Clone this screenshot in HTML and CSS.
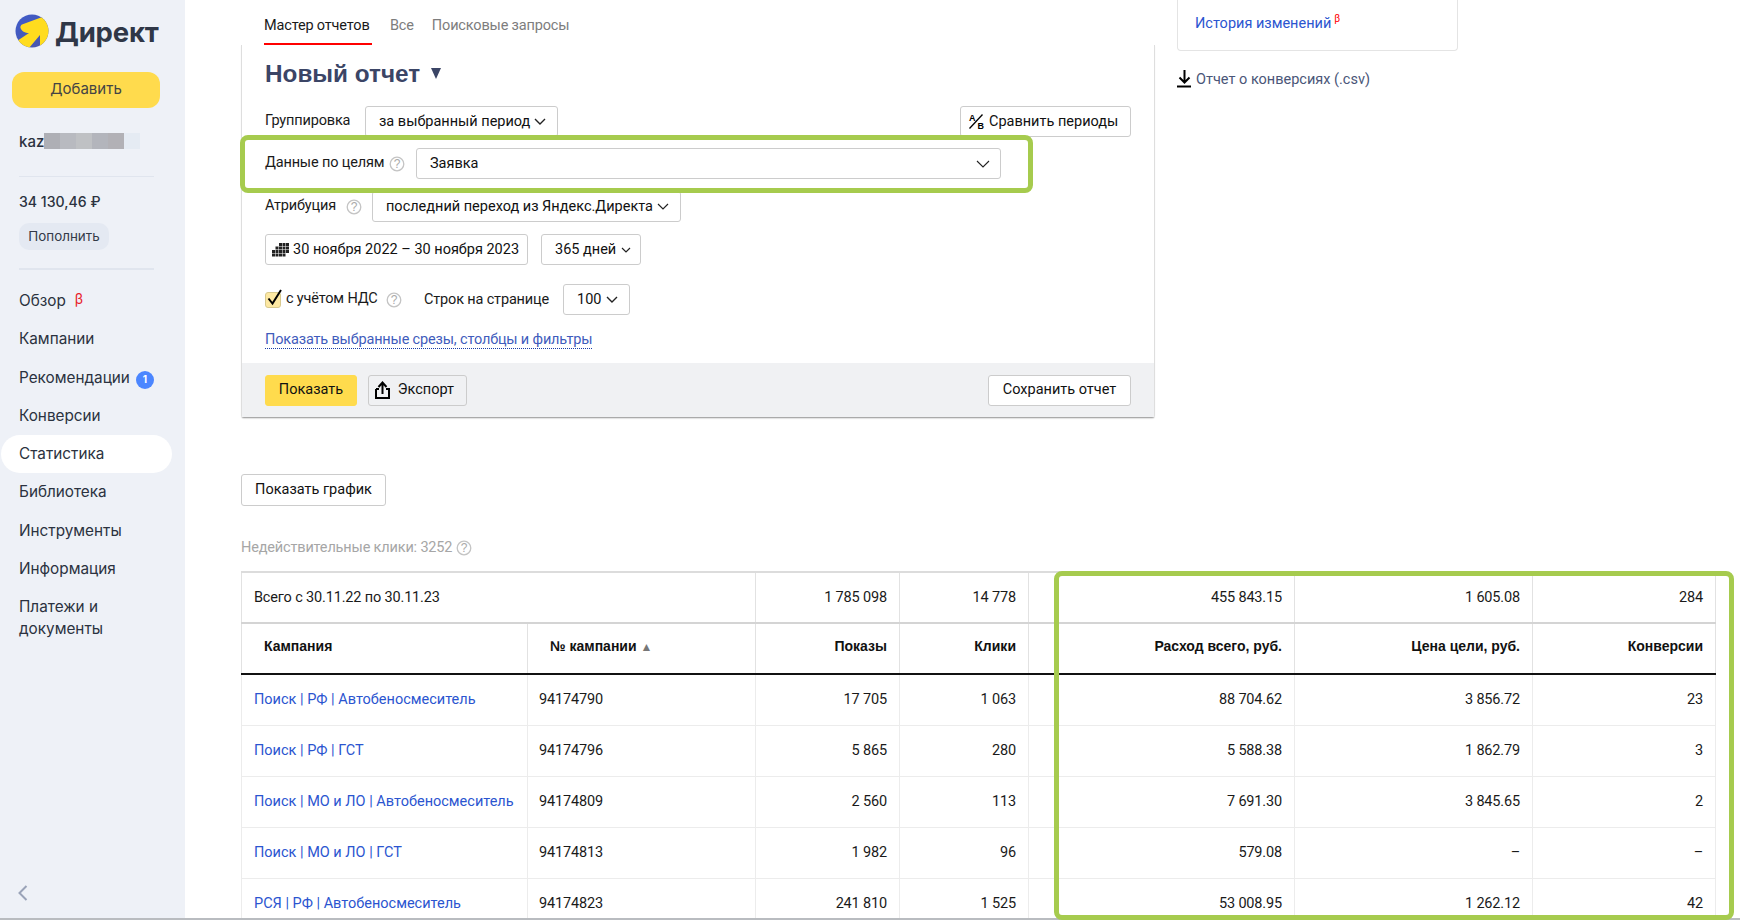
FILE: index.html
```html
<!DOCTYPE html>
<html lang="ru">
<head>
<meta charset="utf-8">
<title>Директ — Статистика</title>
<link rel="stylesheet" href="styles.css">
</head>
<body>
<div class="app">
  <nav class="side">
    <div class="logo">
      <svg class="logo-mark" width="34" height="34" viewBox="0 0 34 34"><defs><clipPath id="lc"><circle cx="17" cy="17" r="16.500"/></clipPath><linearGradient id="lg" x1="0" y1="0" x2="1" y2="1"><stop offset="0" stop-color="#3f5ccb"/><stop offset="1" stop-color="#4a55a8"/></linearGradient></defs><circle cx="17" cy="17" r="16.500" fill="url(#lg)"/><g clip-path="url(#lc)"><path d="M7 10.500C6 11 5 12.500 5.500 14 6.500 17 10 19 14 19L2 27 5 34H14L25 21V34H34V2H30Z" fill="#ffdc1e"/></g></svg>
      <span class="logo-text">Директ</span>
    </div>
    <button class="add">Добавить</button>
    <div class="user"><span>kaz</span><i class="px a"></i><i class="px b"></i><i class="px c"></i><i class="px d"></i><i class="px e"></i><i class="px f"></i></div>
    <div class="sep"></div>
    <div class="balance">34 130,46 ₽</div>
    <button class="topup">Пополнить</button>
    <div class="sep sep2"></div>
    <ul class="menu">
      <li>Обзор<span class="beta">β</span></li>
      <li>Кампании</li>
      <li>Рекомендации<span class="badge">1</span></li>
      <li>Конверсии</li>
      <li class="on">Статистика</li>
      <li>Библиотека</li>
      <li>Инструменты</li>
      <li>Информация</li>
      <li class="two">Платежи и<br>документы</li>
    </ul>
    <svg class="back" width="10" height="16" viewBox="0 0 10 16"><path d="M8.500 1L1.500 8l7 7" fill="none" stroke="#9aa3b8" stroke-width="2"/></svg>
  </nav>
  <main class="main">
    <div class="top">
      <div class="left">
        <div class="tabs"><span class="tab cur">Мастер отчетов</span><span class="tab">Все</span><span class="tab">Поисковые запросы</span></div>
        <section class="card">
          <div class="body">
            <h1 class="title">Новый отчет<span class="tri"></span></h1>
            <div class="row r1">
              <span class="lbl">Группировка</span>
              <button class="btn b-group">за выбранный период<svg width="12" height="7" viewBox="0 0 12 7"><path d="M1 1l5 5 5-5" fill="none" stroke="#222" stroke-width="1.400"/></svg></button>
              <button class="btn cmp"><svg class="ab" width="17" height="18" viewBox="0 0 17 18"><path d="M14.500 1.500L1.500 15.500" stroke="#000" stroke-width="1.300"/><text x="1" y="8" class="abt">A</text><text x="9.500" y="15.500" class="abt">B</text></svg>Сравнить периоды</button>
            </div>
            <div class="row r2">
              <span class="lbl">Данные по целям</span><svg class="q" width="16" height="16" viewBox="0 0 16 16"><circle cx="8" cy="8" r="6.800" fill="none" stroke="#c4c4c4" stroke-width="1.300"/><text x="8" y="12" class="qt">?</text></svg>
              <button class="btn sel">Заявка<svg width="14" height="8" viewBox="0 0 14 8"><path d="M1 1l6 6 6-6" fill="none" stroke="#222" stroke-width="1.100"/></svg></button>
            </div>
            <div class="row r3">
              <span class="lbl">Атрибуция</span><svg class="q" width="16" height="16" viewBox="0 0 16 16"><circle cx="8" cy="8" r="6.800" fill="none" stroke="#c4c4c4" stroke-width="1.300"/><text x="8" y="12" class="qt">?</text></svg>
              <button class="btn b-attr">последний переход из Яндекс.Директа<svg width="12" height="7" viewBox="0 0 12 7"><path d="M1 1l5 5 5-5" fill="none" stroke="#222" stroke-width="1.200"/></svg></button>
            </div>
            <div class="row r4">
              <button class="btn date"><svg class="cal" width="17" height="14" viewBox="0 0 17 14"><path d="M7 0h3v3H7zM10.500 0h3v3h-3zM14 0h3v3h-3zM3.500 3.500h3v3h-3zM7 3.500h3v3H7zM10.500 3.500h3v3h-3zM14 3.500h3v3h-3zM0 7h3v3H0zM3.500 7h3v3h-3zM7 7h3v3H7zM10.500 7h3v3h-3zM14 7h3v3h-3zM0 10.500h3v3H0zM3.500 10.500h3v3h-3zM7 10.500h3v3H7zM10.500 10.500h3v3h-3z" fill="#222"/></svg>30 ноября 2022 – 30 ноября 2023</button>
              <button class="btn days">365 дней<svg width="10" height="6" viewBox="0 0 10 6"><path d="M1 1l4 4 4-4" fill="none" stroke="#222" stroke-width="1.200"/></svg></button>
            </div>
            <div class="row r5">
              <span class="check"><svg width="18" height="20" viewBox="0 0 18 20"><path d="M3.500 10.500l4 5L16 2" fill="none" stroke="#000" stroke-width="2"/></svg></span>
              <span class="lbl vat">с учётом НДС</span><svg class="q" width="16" height="16" viewBox="0 0 16 16"><circle cx="8" cy="8" r="6.800" fill="none" stroke="#c4c4c4" stroke-width="1.300"/><text x="8" y="12" class="qt">?</text></svg>
              <span class="lbl lines">Строк на странице</span>
              <button class="btn num">100<svg width="12" height="7" viewBox="0 0 12 7"><path d="M1 1l5 5 5-5" fill="none" stroke="#222" stroke-width="1.400"/></svg></button>
            </div>
            <div class="more"><a class="dotted">Показать выбранные срезы, столбцы и фильтры</a></div>
          </div>
          <div class="foot">
            <button class="btn go">Показать</button>
            <button class="btn exp"><svg width="15" height="18" viewBox="0 0 15 18"><path d="M1 8v9h13V8h-3M4 8H1M7.500 13V2M3.500 6l4-4.500 4 4.500" fill="none" stroke="#000" stroke-width="2"/></svg>Экспорт</button>
            <button class="btn save">Сохранить отчет</button>
          </div>
        </section>
      </div>
      <aside class="aside">
        <div class="hist"><a class="blue">История изменений</a><sup class="sb">β</sup></div>
        <div class="dl"><svg width="15" height="18" viewBox="0 0 15 18"><path d="M7.500 0v12M2.500 7.500l5 5 5-5" fill="none" stroke="#000" stroke-width="2"/><path d="M0 16.500h14" stroke="#000" stroke-width="2"/></svg><span>Отчет о конверсиях (.csv)</span></div>
      </aside>
    </div>
    <button class="btn graph">Показать график</button>
    <div class="invalid">Недействительные клики: 3252<svg class="q" width="16" height="16" viewBox="0 0 16 16"><circle cx="8" cy="8" r="6.800" fill="none" stroke="#c4c4c4" stroke-width="1.300"/><text x="8" y="12" class="qt">?</text></svg></div>
    <table class="tbl">
      <colgroup><col class="c1"><col class="c2"><col class="c3"><col class="c4"><col class="c5"><col class="c6"><col class="c7"><col class="c8"></colgroup>
      <tr class="sum"><td colspan="2" class="tl">Всего с 30.11.22 по 30.11.23</td><td>1 785 098</td><td>14 778</td><td></td><td>455 843.15</td><td>1 605.08</td><td>284</td></tr>
      <tr class="head"><th class="tl in">Кампания</th><th class="tl in">№ кампании<span class="sort">▲</span></th><th>Показы</th><th>Клики</th><th></th><th>Расход всего, руб.</th><th>Цена цели, руб.</th><th>Конверсии</th></tr>
      <tr><td class="tl"><a class="blue">Поиск | РФ | Автобеносмеситель</a></td><td class="tl">94174790</td><td>17 705</td><td>1 063</td><td></td><td>88 704.62</td><td>3 856.72</td><td>23</td></tr>
      <tr><td class="tl"><a class="blue">Поиск | РФ | ГСТ</a></td><td class="tl">94174796</td><td>5 865</td><td>280</td><td></td><td>5 588.38</td><td>1 862.79</td><td>3</td></tr>
      <tr><td class="tl"><a class="blue">Поиск | МО и ЛО | Автобеносмеситель</a></td><td class="tl">94174809</td><td>2 560</td><td>113</td><td></td><td>7 691.30</td><td>3 845.65</td><td>2</td></tr>
      <tr><td class="tl"><a class="blue">Поиск | МО и ЛО | ГСТ</a></td><td class="tl">94174813</td><td>1 982</td><td>96</td><td></td><td>579.08</td><td>–</td><td>–</td></tr>
      <tr><td class="tl"><a class="blue">РСЯ | РФ | Автобеносмеситель</a></td><td class="tl">94174823</td><td>241 810</td><td>1 525</td><td></td><td>53 008.95</td><td>1 262.12</td><td>42</td></tr>
    </table>
  </main>
</div>
<div class="hl hl-goal"></div>
<div class="hl hl-cols"></div>
</body>
</html>
```
FILE: styles.css
```css
* { box-sizing: border-box; }
html, body { margin: 0; height: 920px; overflow: hidden; background: #fff; }
body { font-family: "Roboto", "Liberation Sans", sans-serif; font-size: 14.5px; letter-spacing: -0.16px; color: #1a1a1a; position: relative; }
button { font: inherit; letter-spacing: 0; color: #111; cursor: pointer; }
ul { list-style: none; margin: 0; padding: 0; }
a { color: inherit; }

.app { display: flex; height: 920px; border-bottom: 2px solid #b9bcc0; overflow: hidden; }

.side { width: 185px; flex: none; background: #eef1f7; position: relative; font-family: "Inter", sans-serif; color: #2b3240; letter-spacing: 0; }
.logo { display: flex; align-items: flex-start; gap: 6px; padding: 14px 0 0 15px; height: 72px; }
.logo-text { font-size: 27.500px; font-weight: 700; line-height: 36px; color: #2f3747; letter-spacing: -0.2px; }
.add { display: block; margin-left: 12px; width: 148px; height: 36px; border: 0; border-radius: 12px; padding: 0 0 3px; background: #ffdb4d; font-size: 15px; color: #444; }
.user { display: flex; align-items: center; padding-left: 19px; margin-top: 25px; height: 16px; font-weight: 500; font-size: 15px; }
.user span { width: 25px; overflow: hidden; flex: none; }
.px { display: block; width: 16px; height: 16px; }
.px.a { background: #aeafb5; } .px.b { background: #b8bac0; } .px.c { background: #bfc1c4; }
.px.d { background: #b3b5bc; } .px.e { background: #b2b1b6; } .px.f { background: #e5ebf3; }
.sep { margin: 27px 0 0 19px; width: 135px; height: 1px; background: #e0e5ee; }
.sep2 { margin-top: 18px; height: 2px; }
.balance { margin: 16px 0 0 19px; font-size: 14.100px; font-weight: 500; line-height: 18px; }
.topup { display: block; margin: 12px 0 0 19px; width: 90px; height: 27px; border: 0; border-radius: 10px; background: #e4e9f2; font-size: 13.400px; color: #333a48; padding: 0 0 2px; }
.menu { margin-top: 12px; font-size: 15.300px; }
.menu li { height: 38.300px; line-height: 38px; padding-left: 19px; }
.menu .on { background: #fff; margin-left: 1px; padding-left: 18px; width: 171px; border-radius: 19px; }
.menu .two { line-height: 22px; padding-top: 8px; }
.beta { color: #e8212b; font-size: 14px; margin-left: 9px; position: relative; top: -2px; }
.badge { display: inline-block; width: 18px; height: 18px; line-height: 17px; margin-left: 6px; border-radius: 50%; background: #4b86ff; color: #fff; font-size: 10px; font-weight: 700; text-align: center; }
.back { position: absolute; left: 18px; top: 885px; }

.main { flex: 1; min-width: 0; padding-left: 56px; }
.top { display: flex; }
.left { width: 914px; flex: none; }
.tabs { display: flex; height: 45px; padding: 17px 0 0 23px; gap: 18px; color: #7d7d7d; line-height: 18px; }
.tab.cur { color: #1a1a1a; height: 28px; min-width: 108px; border-bottom: 2px solid #f00; }
.card { border: 1px solid #dedede; border-top: 0; border-bottom: 1px solid #aaa; height: 373px; border-radius: 0 0 3px 3px; box-shadow: 0 1px 1px rgba(0,0,0,.12); display: flex; flex-direction: column; }
.body { flex: 1; padding: 0 23px; min-height: 0; }
.title { margin: 0; height: 61px; padding-top: 14px; font-size: 24.300px; font-weight: 700; line-height: 30px; letter-spacing: 0; color: #3b4566; font-family: "Liberation Sans", sans-serif; }
.tri { display: inline-block; margin: 0 0 5px 11px; vertical-align: middle; border: 5.500px solid transparent; border-top: 11px solid #3b4566; border-bottom: 0; }

.row { display: flex; align-items: center; }
.btn { display: inline-flex; align-items: center; justify-content: space-between; height: 31px; background: #fff; border: 1px solid #ccc; border-radius: 3px; padding: 0 11px 0 13px; white-space: nowrap; line-height: 18px; flex: none; }
.btn svg { flex: none; }
.lbl { white-space: nowrap; flex: none; padding-bottom: 2px; }
.q { flex: none; }
.qt { font: 12px "Liberation Sans", sans-serif; fill: #aaa; text-anchor: middle; }
.r1 { height: 31px; }
.r1 .lbl { width: 100px; }
.b-group { width: 193px; }
.cmp { margin-left: auto; width: 171px; padding: 0 0 0 7px; justify-content: flex-start; }
.ab { margin-right: 4px; }
.abt { font: 700 9px "Liberation Sans", sans-serif; }
.r2 { height: 31px; margin-top: 11px; }
.r2 .lbl { width: 124px; }
.r2 .q { margin-right: 11px; }
.sel { width: 585px; padding-right: 10px; }
.r3 { height: 31px; margin-top: 12px; }
.r3 .lbl { width: 81px; }
.r3 .q { margin-right: 10px; }
.b-attr { width: 309px; }
.r4 { height: 31px; margin-top: 12px; gap: 13px; }
.date { padding: 0 0 0 6px; width: 263px; justify-content: flex-start; }
.cal { margin-right: 4px; }
.days { width: 100px; padding-right: 9px; }
.r5 { height: 31px; margin-top: 19px; }
.check { width: 16px; height: 16px; background: #fde8a2; border: 1px solid #d8c98e; border-radius: 3px; position: relative; margin-right: 5px; flex: none; }
.check svg { position: absolute; left: -1px; top: -5px; }
.vat { width: 94px; margin-right: 6px; }
.lines { width: 128px; margin: 0 11px 0 22px; padding-bottom: 0; }
.num { width: 67px; padding-right: 11px; }
.more { margin-top: 16px; line-height: 18px; }
.dotted { color: #3f5cbc; border-bottom: 1px dotted #1b3ea8; }
.foot { flex: none; height: 54px; background: #f0f1f3; display: flex; align-items: center; padding: 0 23px; gap: 11px; }
.go { width: 92px; justify-content: center; background: #ffdb4d; border-color: #ffdb4d; padding: 0; }
.exp { width: 99px; padding: 0 12px 0 6px; background: transparent; }
.save { margin-left: auto; width: 143px; justify-content: center; padding: 0; }

.aside { margin-left: 22px; width: 281px; }
.hist { height: 51px; border: 1px solid #e4e4e4; border-top: 0; border-radius: 0 0 4px 4px; padding: 15px 0 0 17px; line-height: 18px; }
.blue { color: #2b55d0; letter-spacing: 0; }
.sb { color: #f00; font-size: 10px; margin-left: 3px; line-height: 0; }
.dl { display: flex; align-items: center; gap: 4px; margin-top: 19px; color: #4a5678; letter-spacing: 0; }

.graph { display: flex; margin-top: 56px; width: 145px; height: 32px; padding: 0; justify-content: center; }
.invalid { margin-top: 33px; height: 18px; line-height: 18px; color: #a6a6a6; display: flex; align-items: center; gap: 4px; }
.tbl { margin-top: 14px; width: 1474px; table-layout: fixed; border-collapse: collapse; }
.c1 { width: 286px; } .c2 { width: 228px; } .c3 { width: 144px; } .c4 { width: 129px; } .c5 { width: 29px; } .c6 { width: 237px; } .c7 { width: 238px; } .c8 { width: 183px; }
.tbl td, .tbl th { height: 51px; padding: 0 12px; text-align: right; border: 1px solid #ececec; white-space: nowrap; font-weight: 400; }
.tbl th { font-weight: 700; color: #111; padding-bottom: 6px; border-bottom: 2px solid #111; border-right-color: #e2e2e2; border-left-color: #e2e2e2; font-family: "Liberation Sans", sans-serif; font-size: 14px; letter-spacing: 0; }
.tbl .tl { text-align: left; }
.tbl td.tl + td.tl { padding-left: 11px; }
.tbl .in { padding-left: 22px; }
.sum td { border-top: 2px solid #dcdcdc; border-bottom: 2px solid #d4d4d4; border-left-color: #e2e2e2; border-right-color: #e2e2e2; }
.sort { color: #777; font-size: 12px; margin-left: 4px; font-weight: 400; }

.hl { position: absolute; border: 5px solid #a6cb4e; border-radius: 8px; pointer-events: none; }
.hl-goal { left: 240px; top: 135px; width: 793px; height: 58px; }
.hl-cols { left: 1054px; top: 571px; width: 680px; height: 349px; }
```
